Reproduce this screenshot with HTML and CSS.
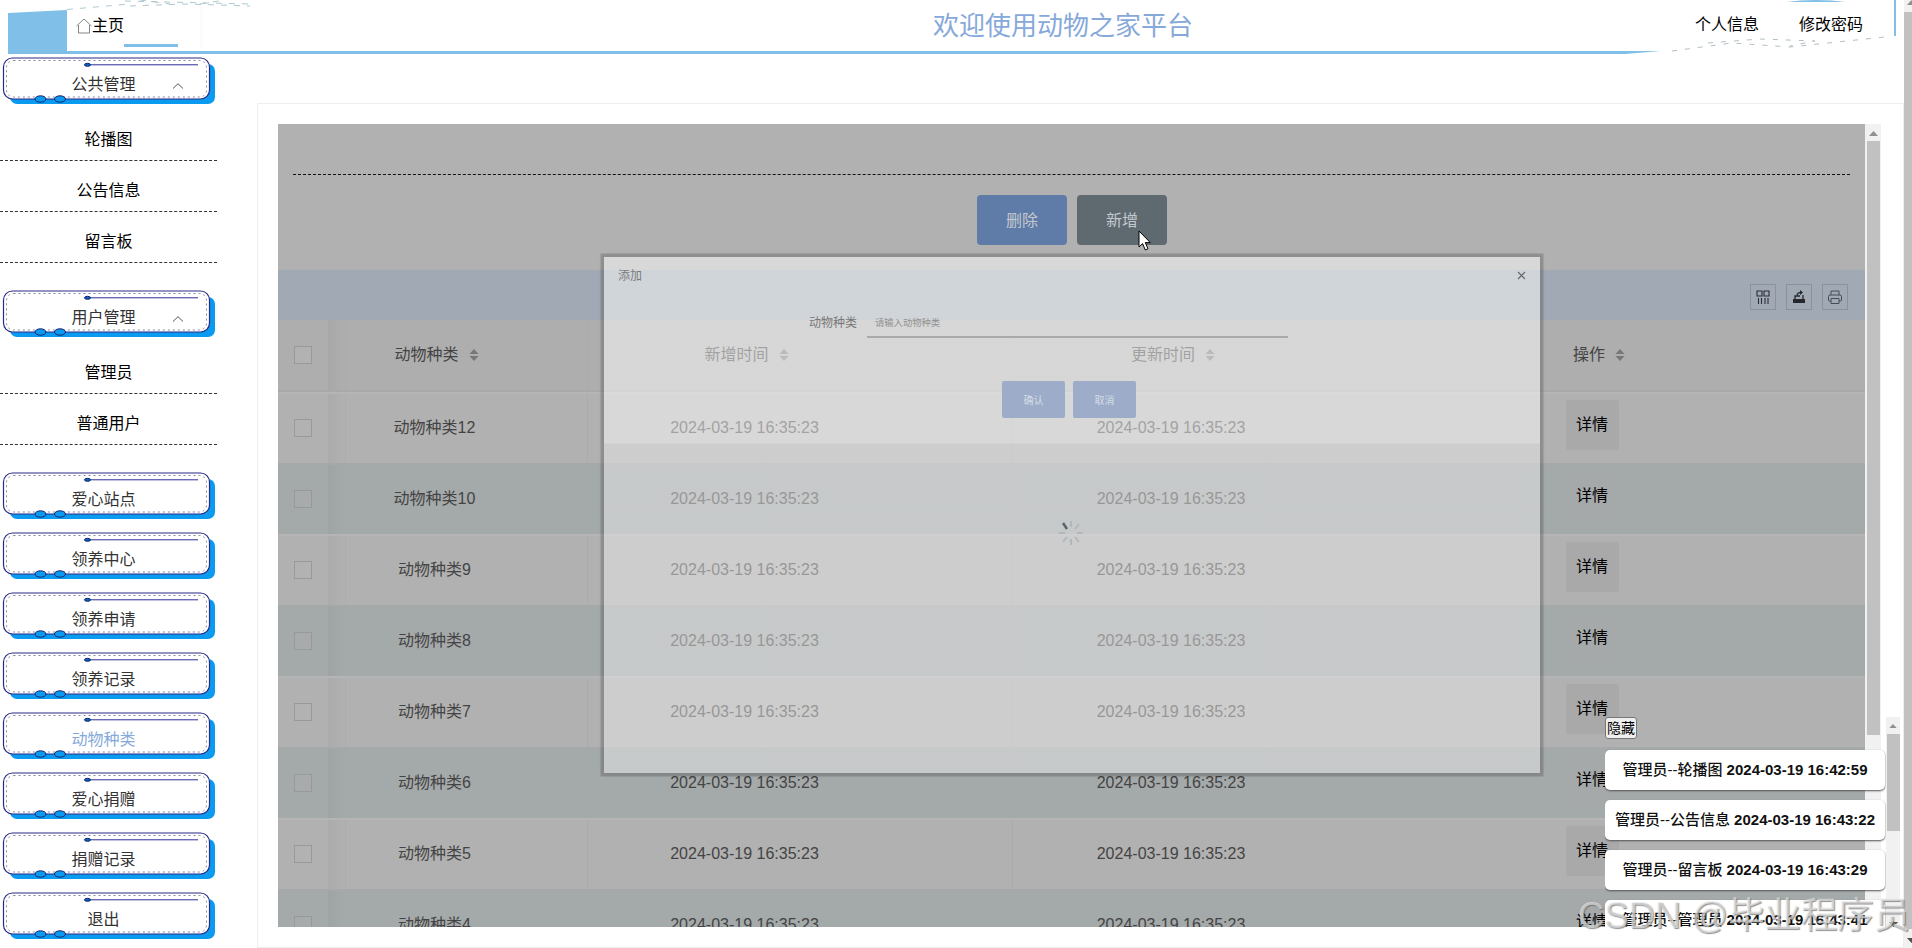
FILE: index.html
```html
<!DOCTYPE html>
<html lang="zh-CN">
<head>
<meta charset="utf-8">
<title>动物之家平台</title>
<link rel="stylesheet" href="styles.css">
</head>
<body>
<svg class="defs" width="0" height="0">
  <symbol id="plate" viewBox="0 0 218 51">
    <rect x="10" y="9" width="205" height="40" rx="7" fill="#0a9bf0"/>
    <rect x="3.5" y="3" width="206" height="41" rx="9" fill="#fff" stroke="#2a2a86" stroke-width="1.2"/>
    <rect x="6.5" y="5.5" width="200" height="36.5" rx="7" fill="none" stroke="#55557c" stroke-width=".7" stroke-dasharray="2 3"/>
    <path d="M88 9.8H198" stroke="#2e2e98"/>
    <ellipse cx="87.500" cy="9.800" rx="3" ry="1.500" fill="#0a5fc0" stroke="#14246e"/>
    <ellipse cx="40.500" cy="44" rx="5.500" ry="3.200" fill="#0a9bf0" stroke="#14246e"/>
    <ellipse cx="60" cy="44" rx="5.500" ry="3.200" fill="#0a9bf0" stroke="#14246e"/>
  </symbol>
  <symbol id="sort" viewBox="0 0 10 12"><path d="M5 0L9.500 5H.5zM5 12L.5 7H9.500z" fill="currentColor"/></symbol>
</svg>

<header class="topbar">
  <svg class="frame" width="1904" height="58" viewBox="0 0 1904 58">
    <path d="M8 13L67 10V51H1661L1625 54H8z" fill="#7fbfe8"/>
    <path d="M67 9.500L130 4M125 1L250 4M130 6L185 4L250 6M140 0L170 4M200 4L225 0" fill="none" stroke="#a5c2c9" stroke-width=".9" stroke-dasharray="6 7"/>
    <path d="M124 45.500H178" stroke="#7fbfe8" stroke-width="3"/>
    <path d="M201 6V50" stroke="#f6f8f9"/>
    <path d="M1787 2Q1800 0 1816 0Q1832 0 1845 2z" fill="#7fbfe8"/>
    <path d="M1895 0V36" stroke="#7fbfe8" stroke-width="2"/>
    <path d="M1672 51L1732 43L1790 47L1885 37M1708 43L1760 39L1815 41L1790 46" fill="none" stroke="#a9b8bd" stroke-width=".9" stroke-dasharray="5 8"/>
  </svg>
  <a class="home"><svg width="16" height="16" viewBox="0 0 16 16" fill="none" stroke="#666" stroke-width=".8"><path d="M.5 8L8 1L15.500 8M2.500 7V15H13.500V7"/></svg>主页</a>
  <h1>欢迎使用动物之家平台</h1>
  <nav class="account"><a>个人信息</a><a>修改密码</a></nav>
</header>

<div class="layout">
  <aside class="sidebar">
    <a class="item"><svg class="bg"><use href="#plate"/></svg><span>公共管理</span><svg class="caret" viewBox="0 0 12 6"><path d="M1 5.500L6 .7L11 5.500"/></svg></a>
    <div class="sub"><a>轮播图</a><a>公告信息</a><a>留言板</a></div>
    <a class="item"><svg class="bg"><use href="#plate"/></svg><span>用户管理</span><svg class="caret" viewBox="0 0 12 6"><path d="M1 5.500L6 .7L11 5.500"/></svg></a>
    <div class="sub"><a>管理员</a><a>普通用户</a></div>
    <a class="item"><svg class="bg"><use href="#plate"/></svg><span>爱心站点</span></a>
    <a class="item"><svg class="bg"><use href="#plate"/></svg><span>领养中心</span></a>
    <a class="item"><svg class="bg"><use href="#plate"/></svg><span>领养申请</span></a>
    <a class="item"><svg class="bg"><use href="#plate"/></svg><span>领养记录</span></a>
    <a class="item active"><svg class="bg"><use href="#plate"/></svg><span>动物种类</span></a>
    <a class="item"><svg class="bg"><use href="#plate"/></svg><span>爱心捐赠</span></a>
    <a class="item"><svg class="bg"><use href="#plate"/></svg><span>捐赠记录</span></a>
    <a class="item"><svg class="bg"><use href="#plate"/></svg><span>退出</span></a>
  </aside>

  <main class="panel">
    <section class="view">
      <div class="divider"></div>
      <div class="actions"><button class="btn del">删除</button><button class="btn add">新增</button></div>
      <div class="tools">
        <i><svg width="14" height="14" viewBox="0 0 14 14" fill="none" stroke="#2d2a3a" stroke-width="1.1"><path d="M1 1H6V6H1zM8 1H13V6H8zM2.500 8V14M5.500 8V14M9 8V14M12 8V14"/></svg></i>
        <i><svg width="14" height="14" viewBox="0 0 14 14"><path d="M1 9H13V13H1z" fill="#26282e"/><path d="M3 9V6H8M11 5V9M5 5Q6 2 10 2.500" fill="none" stroke="#26282e" stroke-width="1.300"/><path d="M8 0L11 2.500L8 5z" fill="#26282e"/></svg></i>
        <i><svg width="14" height="14" viewBox="0 0 14 14" fill="none" stroke="#454c55"><path d="M3 5V1H11V5M3 11H1.500Q.5 11 .5 10V6.500Q.5 5 2 5H12Q13.500 5 13.500 6.500V10Q13.500 11 12.500 11H11M3 8.500H11V13.500H3z"/></svg></i>
      </div>
      <div class="row head"><div><b class="box"></b></div><div>动物种类<svg class="sort"><use href="#sort"/></svg></div><div>新增时间<svg class="sort"><use href="#sort"/></svg></div><div>更新时间<svg class="sort"><use href="#sort"/></svg></div><div>操作<svg class="sort"><use href="#sort"/></svg></div></div>
      <div class="row"><div><b class="box"></b></div><div>动物种类12</div><div>2024-03-19 16:35:23</div><div>2024-03-19 16:35:23</div><div><span class="detail">详情</span></div></div>
      <div class="row even"><div><b class="box"></b></div><div>动物种类10</div><div>2024-03-19 16:35:23</div><div>2024-03-19 16:35:23</div><div><span class="detail">详情</span></div></div>
      <div class="row"><div><b class="box"></b></div><div>动物种类9</div><div>2024-03-19 16:35:23</div><div>2024-03-19 16:35:23</div><div><span class="detail">详情</span></div></div>
      <div class="row even"><div><b class="box"></b></div><div>动物种类8</div><div>2024-03-19 16:35:23</div><div>2024-03-19 16:35:23</div><div><span class="detail">详情</span></div></div>
      <div class="row"><div><b class="box"></b></div><div>动物种类7</div><div>2024-03-19 16:35:23</div><div>2024-03-19 16:35:23</div><div><span class="detail">详情</span></div></div>
      <div class="row even"><div><b class="box"></b></div><div>动物种类6</div><div>2024-03-19 16:35:23</div><div>2024-03-19 16:35:23</div><div><span class="detail">详情</span></div></div>
      <div class="row"><div><b class="box"></b></div><div>动物种类5</div><div>2024-03-19 16:35:23</div><div>2024-03-19 16:35:23</div><div><span class="detail">详情</span></div></div>
      <div class="row even"><div><b class="box"></b></div><div>动物种类4</div><div>2024-03-19 16:35:23</div><div>2024-03-19 16:35:23</div><div><span class="detail">详情</span></div></div>
    </section>
    <div class="bar view-bar"><svg width="9" height="5" viewBox="0 0 9 5"><path d="M0 5L4.500 0L9 5z" fill="#909090"/></svg><div class="thumb"></div></div>
  </main>
</div>

<div class="bar page-bar"><svg width="9" height="5" viewBox="0 0 9 5"><path d="M0 5L4.500 0L9 5z" fill="#909090"/></svg><div class="thumb"></div><svg class="down" width="9" height="5" viewBox="0 0 9 5"><path d="M0 0L4.500 5L9 0z" fill="#505050"/></svg></div>

<div class="modal">
  <div class="modal-title"><span>添加</span><svg width="9" height="9" viewBox="0 0 9 9"><path d="M1 1L8 8M8 1L1 8" stroke="#666" stroke-width="1.100"/></svg></div>
  <div class="field"><label>动物种类</label><span>请输入动物种类</span></div>
  <div class="modal-actions"><button>确认</button><button>取消</button></div>
</div>
<svg class="spinner" width="28" height="28" viewBox="-14 -14 28 28" stroke="#b0b8bb" stroke-width="2"><path d="M0-6V-12M4-4L8-9M6 0H12M4 4L8 9M0 6V12M-4 4L-8 9M-6 0H-12"/><path d="M-4-4L-8-10" stroke="#56656a" stroke-width="2.500"/></svg>
<svg class="cursor" width="14" height="21" viewBox="0 0 14 21"><path d="M1 1V17L4.600 13.600L7.300 20L10 18.800L7.300 12.600H12.300z" fill="#fff" stroke="#000"/></svg>

<div class="notices">
  <div class="notice-list">
    <button class="hide">隐藏</button>
    <p>管理员--轮播图 <b>2024-03-19 16:42:59</b></p>
    <p>管理员--公告信息 <b>2024-03-19 16:43:22</b></p>
    <p>管理员--留言板 <b>2024-03-19 16:43:29</b></p>
    <p>管理员--管理员 <b>2024-03-19 16:43:41</b></p>
  </div>
  <div class="bar notice-bar"><svg width="8" height="4" viewBox="0 0 9 5"><path d="M0 5L4.500 0L9 5z" fill="#909090"/></svg><div class="thumb"></div><svg class="down" width="9" height="5" viewBox="0 0 9 5"><path d="M0 0L4.500 5L9 0z" fill="#505050"/></svg></div>
</div>
<div class="watermark">CSDN @毕业程序员</div>
</body>
</html>
```

FILE: styles.css
```css
* { box-sizing: border-box; }
body {
  margin: 0;
  width: 1912px;
  height: 948px;
  overflow: hidden;
  position: relative;
  background: #fff;
  color: #000;
  font: 16px/22px "Liberation Sans", "Noto Sans CJK SC", sans-serif;
}
button { font-family: inherit; padding: 0; border: 0; }
.defs { position: absolute; }

.topbar { position: relative; display: flex; height: 55px; width: 1904px; }
.frame { position: absolute; left: 0; top: 0; }
.home { position: relative; display: flex; align-items: center; height: 51px; padding-left: 76px; width: 933px; }
.topbar h1 { position: relative; margin: 0; font-size: 26px; line-height: 53px; font-weight: 400; color: #86a9da; width: 762px; }
.account { position: relative; display: flex; gap: 40px; line-height: 50px; }

.layout { display: flex; align-items: flex-start; }
.sidebar { width: 257px; flex: none; }
.item { position: relative; display: block; width: 218px; height: 50px; margin-bottom: 10px; color: #333; }
.item .bg { position: absolute; left: 0; top: 0; width: 218px; height: 51px; }
.item span { position: relative; display: block; width: 207px; text-align: center; line-height: 22px; padding-top: 19px; }
.item.active { color: #86a9da; }
.caret { position: absolute; left: 172px; top: 28px; width: 12px; height: 6px; fill: none; stroke: #555; }
.sub { width: 217px; padding: 0 0 20px; margin-top: -5px; }
.sub + .item { margin-top: 5px; }
.sub a { display: block; height: 51px; padding-top: 19px; text-align: center; border-bottom: 1px dashed #333; }

.panel { display: flex; width: 1647px; height: 845px; margin-top: 48px; padding: 20px 0 0 20px; border: 1px solid #eee; }
.view { width: 1587px; height: 803px; overflow: hidden; background: #b1b1b1; }
.divider { height: 51px; margin: 0 15px; border-bottom: 1px dashed #111; }
.actions { display: flex; gap: 10px; padding: 20px 0 25px 699px; }
.btn { width: 90px; height: 50px; padding-bottom: 2px; border-radius: 4px; font-size: 16px; color: #c3c8cd; }
.del { background: #5f7ca8; }
.add { background: #5f6a70; }
.tools { display: flex; justify-content: flex-end; gap: 10px; height: 50px; padding: 14px 17px 0 0; background: #a1aab4; }
.tools i { display: grid; place-items: center; width: 26px; height: 26px; border: 1px solid #8b929b; }
.row { display: grid; grid-template-columns: 67px 242px 425px 425px 428px; height: 71px; color: #444; border-top: 2px solid #b5b5b5; }
.row > div { display: flex; align-items: center; justify-content: center; border-left: 1px solid #ababab; padding-bottom: 2px; }
.row > div:nth-child(1) { justify-content: flex-start; padding-left: 16px; border-left: 0; background: linear-gradient(90deg, transparent 50px, rgba(0,0,0,.035) 50px, transparent 66px); }
.row > div:nth-child(2) { padding-right: 64px; }
.row > div:nth-child(3) { padding-right: 111px; }
.row > div:nth-child(4) { padding-right: 108px; }
.row > div:nth-child(5) { padding-right: 119px; border-left-color: transparent; }
.row.even { background: #a4a9aa; border-top-color: #a6a9a9; }
.row.even > div { border-left-color: transparent; }
.row.head { height: 72px; background: #aeaeae; border-top-width: 0; border-bottom: 2px solid #a9a9a9; }
.row.head > div { padding-left: 4px; padding-bottom: 0; }
.row.head > div:nth-child(1) { padding-left: 16px; }
.row.head > div:nth-child(5) { padding-left: 14px; }
.box { width: 18px; height: 18px; border: 1px solid #999; background: #b2b2b2; }
.even .box { background: #a7abac; }
.sort { width: 10px; height: 12px; margin-left: 10px; color: #777; }
.detail { width: 53px; height: 50px; margin-bottom: 6px; line-height: 50px; text-align: center; color: #000; background: #a9a9aa; border-radius: 3px; }
.even .detail { background: #a6a9aa; }

.bar { background: #f1f1f1; display: flex; flex-direction: column; align-items: center; overflow: hidden; }
.thumb { background: #c1c1c1; width: 100%; }
.bar svg { flex: none; }
.view-bar { width: 16px; height: 803px; padding-top: 7px; }
.view-bar .thumb { width: 13px; height: 594px; margin-top: 5px; }
.page-bar { position: absolute; left: 1904px; top: 0; width: 15px; height: 948px; }
.page-bar .thumb { height: 917px; margin: 7px 0 9px; }

.modal {
  position: absolute; left: 604px; top: 257px; width: 936px; height: 516px;
  background: linear-gradient(rgba(255,255,255,.5) 186px, rgba(233,233,233,.5) 187px);
  box-shadow: 0 0 0 3.500px rgba(0,0,0,.16), 0 0 6px rgba(0,0,0,.12);
}
.modal-title { display: flex; justify-content: space-between; align-items: center; height: 37px; padding: 0 14px; font-size: 12px; color: #7c7c7c; }
.field { display: flex; height: 44px; padding: 18px 0 0 205px; font-size: 12px; line-height: 22px; color: #777; }
.field label { width: 58px; }
.field span { width: 421px; height: 26px; padding-left: 8px; font-size: 9.3px; color: #919191; border-bottom: 2px solid #aaa; }
.modal-actions { display: flex; gap: 8px; padding: 43px 0 0 398px; }
.modal-actions button { width: 63px; height: 37px; border-radius: 2px; background: #9cacc9; color: #d4dce6; font-size: 10px; }
.spinner { position: absolute; left: 1057px; top: 519px; }
.cursor { position: absolute; left: 1138px; top: 230px; }

.notices { position: absolute; left: 1605px; top: 717px; height: 210px; display: flex; gap: 1px; overflow: hidden; }
.notice-list { width: 280px; }
.hide { display: block; width: 32px; height: 22px; margin-bottom: 11px; border: 1px solid #777; border-radius: 3px; background: #efefef; font-size: 14px; line-height: 20px; }
.notices p { height: 40px; margin: 0 0 10px; border-radius: 5px; background: #fff; box-shadow: 0 1px 2px #555; font-size: 15px; line-height: 40px; font-weight: 500; text-align: center; color: #111; white-space: nowrap; }
.notice-bar { width: 14px; height: 210px; padding-top: 7px; }
.notice-bar .thumb { height: 97px; margin: 6px 0 91px; width: 13px; }
.watermark { position: absolute; left: 1578px; top: 892px; width: 334px; overflow: hidden; font-size: 36.4px; line-height: 48px; white-space: nowrap; color: rgba(235,235,235,.65); text-shadow: 1px 1px 1px rgba(100,100,100,.7); }
```
